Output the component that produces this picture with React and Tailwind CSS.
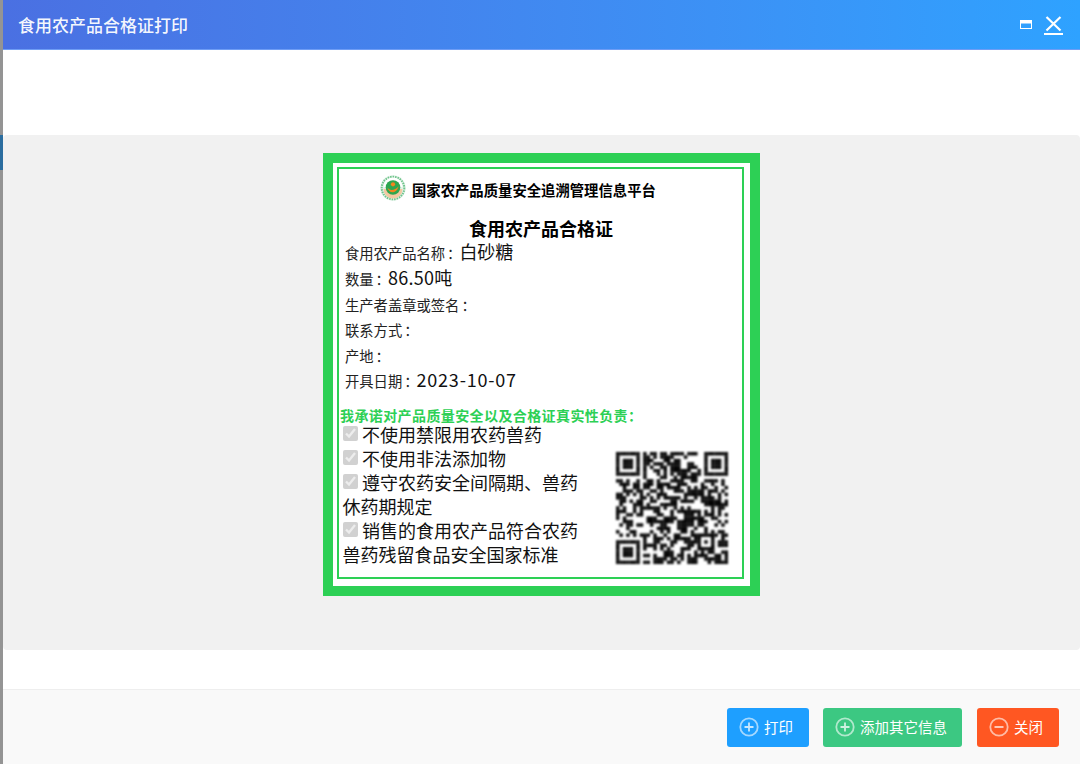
import React from "react";

const font = { fontFamily: '"Noto Sans CJK SC", "Liberation Sans", sans-serif' };

function buildQr() {
  const n = 33;
  const m = [];
  let s = 20231007;
  const rnd = () => {
    s = (s * 1664525 + 1013904223) >>> 0;
    return (s >>> 16) / 65536;
  };
  for (let y = 0; y < n; y++) {
    m.push([]);
    for (let x = 0; x < n; x++) m[y].push(rnd() > 0.48);
  }
  const finder = (ox, oy) => {
    for (let y = -1; y < 8; y++)
      for (let x = -1; x < 8; x++) {
        const px = ox + x, py = oy + y;
        if (px < 0 || py < 0 || px >= n || py >= n) continue;
        const inRange = x >= 0 && x < 7 && y >= 0 && y < 7;
        const ring = x === 0 || x === 6 || y === 0 || y === 6;
        const core = x >= 2 && x <= 4 && y >= 2 && y <= 4;
        m[py][px] = inRange && (ring || core);
      }
  };
  finder(0, 0);
  finder(n - 7, 0);
  finder(0, n - 7);
  for (let y = -2; y <= 2; y++)
    for (let x = -2; x <= 2; x++)
      m[n - 7 + y][n - 7 + x] = Math.max(Math.abs(x), Math.abs(y)) !== 1;
  return m;
}

function Qr() {
  const m = buildQr();
  return (
    <svg viewBox="0 0 33 33" className="w-[112px] h-[112px] shrink-0 blur-[0.8px]">
      {m.map((row, y) =>
        row.map((on, x) => (on ? <rect key={x + "-" + y} x={x} y={y} width="1.02" height="1.02" fill="#000" /> : null))
      )}
    </svg>
  );
}

function Logo() {
  return (
    <svg viewBox="0 0 26 26" className="w-[26px] h-[26px] shrink-0">
      <circle cx="13" cy="13" r="12.700" fill="#e3f3e8" />
      <circle cx="13" cy="13" r="11.300" fill="none" stroke="#6fc48c" strokeWidth="2" strokeDasharray="1.500 1" />
      <path d="M3.500 14a9.500 9.500 0 0 0 19 0" fill="#f3c9a2" />
      <path d="M3.500 12a9.500 9.500 0 0 1 19 0" fill="#fff" />
      <circle cx="13" cy="12.500" r="7.300" fill="#2ca64e" />
      <circle cx="13" cy="9.300" r="2.100" fill="#f0851e" />
      <path d="M7.300 12.500c2.200 3.200 7 3.700 11.400-1.200-1.500 4.700-4 6-6.200 6-2.400 0-4.200-2-5.200-4.800z" fill="#f0851e" />
    </svg>
  );
}

function BtnIcon({ minus }) {
  return (
    <svg viewBox="0 0 20 20" className="w-5 h-5 shrink-0">
      <circle cx="10" cy="10" r="8.700" fill="none" stroke="#fff" strokeOpacity="0.6" strokeWidth="1.800" />
      <path d={minus ? "M5.500 10h9" : "M5.500 10h9M10 5.500v9"} stroke="#fff" strokeOpacity="0.75" strokeWidth="1.800" />
    </svg>
  );
}

function Field({ label, value, valueClass = "" }) {
  return (
    <div className={"flex items-baseline h-[25.5px] leading-[25.5px] whitespace-nowrap " + (value ? "" : "pt-[1.5px]")}>
      <span className="text-[14.3px] text-[#222]">
        {label}
        <span className="inline-block w-[14.3px] pl-[2px]">：</span>
      </span>
      {value ? <span className={"text-[18px] text-[#111] " + valueClass}>{value}</span> : null}
    </div>
  );
}

function Check() {
  return (
    <input
      type="checkbox"
      checked
      disabled
      readOnly
      className="w-[15px] h-[15px] m-0 mr-[4.5px] align-[1px]"
    />
  );
}

function Btn({ color, width, minus, children }) {
  return (
    <button
      className={"h-[39px] rounded-[3px] flex items-center justify-start pl-[12px] pb-[2px] gap-[5px] text-white text-[14.5px] " + color + " " + width}
    >
      <BtnIcon minus={minus} />
      <span>{children}</span>
    </button>
  );
}

export default function App() {
  return (
    <div className="w-[1080px] h-[764px] flex overflow-hidden bg-white" style={font}>
      <div className="w-[3px] shrink-0 flex flex-col bg-[#949494]">
        <div className="h-[135px]" />
        <div className="h-[35px] bg-[#2b6d9f]" />
      </div>
      <div className="flex-1 flex flex-col min-w-0">
        <header className="h-[50px] shrink-0 flex items-center pl-[15px] pr-[17px] bg-gradient-to-r from-[#4a70e2] to-[#2ea2ff] border-b border-[#6f9df5]">
          <span className="text-[17px] font-medium text-white/95">食用农产品合格证打印</span>
          <div className="ml-auto flex items-center gap-[12px]">
            <svg viewBox="0 0 12 9" className="w-3 h-[9px]">
              <rect x="0.500" y="0.500" width="11" height="8" fill="none" stroke="#fff" />
              <rect x="0.500" y="0.500" width="11" height="3" fill="#fff" />
            </svg>
            <svg viewBox="0 0 19 21" className="w-[19px] h-[21px]">
              <path d="M3 3l14 13.500M17 3L3 16.500" transform="translate(-0.500 0)" stroke="#fff" strokeWidth="2.200" fill="none" />
              <path d="M0 20h19" stroke="#fff" strokeWidth="2" />
            </svg>
          </div>
        </header>

        <div className="h-[85px] shrink-0 bg-white" />

        <main className="h-[515px] shrink-0 bg-[#f1f1f1] rounded-[4px] flex justify-center pt-[18px]">
          <div className="w-[437px] h-[443px] bg-white border-[10px] border-[#2dd055] pt-[4px] pl-[4px] pr-[6px] pb-[7px]">
            <div className="h-full border-[2px] border-[#2dd055] px-[1px] flex flex-col">
              <div className="flex items-center h-[31px] pl-[40px] mt-[3px]">
                <Logo />
                <span className="ml-[6px] mt-[4px] text-[14.35px] font-bold text-black whitespace-nowrap">国家农产品质量安全追溯管理信息平台</span>
              </div>
              <h1 className="text-[18px] font-bold text-black text-center leading-[24px] mt-[13px] ml-[1px]">食用农产品合格证</h1>
              <div className="pl-[5px] mt-[-1px]">
                <Field label="食用农产品名称" value="白砂糖" />
                <Field label="数量" value="86.50吨" valueClass="tracking-[0.3px]" />
                <Field label="生产者盖章或签名" />
                <Field label="联系方式" />
                <Field label="产地" />
                <Field label="开具日期" value="2023-10-07" valueClass="tracking-[0.8px]" />
              </div>
              <p className="text-[14px] tracking-[0.4px] font-bold text-[#2dd055] leading-[14px] mt-[16px] whitespace-nowrap">我承诺对产品质量安全以及合格证真实性负责：</p>
              <div className="flex items-end pl-[2.5px] pr-[13px]">
                <div className="w-[240px] text-[18px] leading-[24px] text-[#111]">
                  <div><Check />不使用禁限用农药兽药</div>
                  <div><Check />不使用非法添加物</div>
                  <div><Check />遵守农药安全间隔期、兽药休药期规定</div>
                  <div><Check />销售的食用农产品符合农药兽药残留食品安全国家标准</div>
                </div>
                <div className="ml-auto mb-[2px]">
                  <Qr />
                </div>
              </div>
            </div>
          </div>
        </main>

        <div className="h-[39px] shrink-0 bg-white" />

        <footer className="flex-1 bg-[#f9f9f9] border-t border-[#eeeeee] flex items-start justify-end gap-[14px] pt-[18px] pr-[21px]">
          <Btn color="bg-[#1e9fff]" width="w-[82px]">打印</Btn>
          <Btn color="bg-[#3cc882]" width="w-[139px]">添加其它信息</Btn>
          <Btn color="bg-[#ff5722]" width="w-[82px] ml-px" minus>关闭</Btn>
        </footer>
      </div>
    </div>
  );
}
